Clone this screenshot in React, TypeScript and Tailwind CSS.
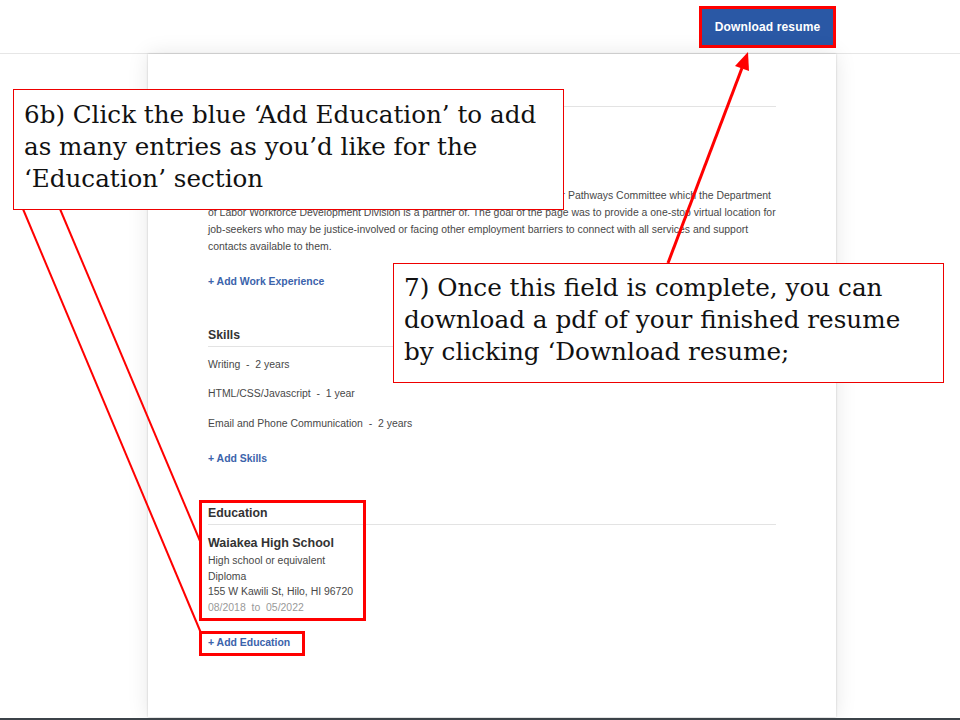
import React from "react";

const sans = { fontFamily: '"Liberation Sans", Arial, sans-serif' };
const serif = { fontFamily: '"DejaVu Serif", "Liberation Serif", serif' };

export default function App() {
  return (
    <div className="relative w-[960px] h-[720px] overflow-hidden bg-white" style={sans}>
      {/* header */}
      <div className="h-[54px] border-b border-[#e6e6e6] flex justify-end items-start pr-[124px] pt-[6px]">
        <div className="w-[137px] h-[42px] border-[3px] border-[#ff0000] bg-[#2a58a5] flex items-center justify-center">
          <span className="text-white text-[12px] font-bold tracking-[0.15px]">Download resume</span>
        </div>
      </div>

      {/* body */}
      <div className="flex h-[664px]">
        <div className="ml-[148px] w-[688px] h-[663px] bg-white shadow-[0_0_2px_rgba(0,0,0,0.2),0_0_20px_rgba(0,0,0,0.1)] px-[60px] text-[#484848] text-[10.45px]">
          {/* Work Experience (covered by callout) */}
          <div className="h-[53px] border-b border-[#e3e3e3]" />
          <div className="h-[80px]" />
          <div className="leading-[17px] whitespace-nowrap">
            <div className="text-right pr-[5px]">r Pathways Committee which the Department</div>
            <div>of Labor Workforce Development Division is a partner of. The goal of the page was to provide a one-stop virtual location for</div>
            <div>job-seekers who may be justice-involved or facing other employment barriers to connect with all services and support</div>
            <div>contacts available to them.</div>
          </div>
          <div className="mt-[19px] leading-[16px] text-[#3b63ab] font-bold">+ Add Work Experience</div>

          {/* Skills */}
          <div className="mt-[37px] leading-[16px] pb-[3px] border-b border-[#e3e3e3] text-[12.3px] font-bold text-[#333]">
            Skills
          </div>
          <div className="mt-[10px] leading-[16px]">Writing&nbsp; - &nbsp;2 years</div>
          <div className="mt-[13px] leading-[16px]">HTML/CSS/Javascript&nbsp; - &nbsp;1 year</div>
          <div className="mt-[14px] leading-[16px]">Email and Phone Communication&nbsp; - &nbsp;2 years</div>
          <div className="mt-[19px] leading-[16px] text-[#3b63ab] font-bold">+ Add Skills</div>

          {/* Education */}
          <div className="mt-[38px] leading-[16px] pb-[3px] border-b border-[#e3e3e3] text-[12.3px] font-bold text-[#333]">
            Education
          </div>
          <div className="mt-[10px] leading-[16px] text-[12.5px] font-bold text-[#333]">Waiakea High School</div>
          <div className="mt-[2px] leading-[15.5px]">
            <div>High school or equivalent</div>
            <div>Diploma</div>
            <div>155 W Kawili St, Hilo, HI 96720</div>
            <div className="text-[#999]">08/2018&nbsp; to &nbsp;05/2022</div>
          </div>
          <div className="mt-[20px] leading-[16px] text-[#3b63ab] font-bold">+ Add Education</div>
        </div>
      </div>

      {/* bottom bar */}
      <div className="absolute left-0 right-0 bottom-0 h-[2px] bg-[#3c4349]" />

      {/* highlight boxes */}
      <div className="absolute left-[199px] top-[500px] w-[167px] h-[121px] border-[3px] border-[#ff0000]" />
      <div className="absolute left-[199px] top-[631px] w-[106px] h-[25px] border-[3px] border-[#ff0000]" />

      {/* arrows */}
      <svg className="absolute left-0 top-0" width="960" height="720" viewBox="0 0 960 720">
        <line x1="668" y1="263" x2="742" y2="68" stroke="#ff0000" strokeWidth="3" />
        <polygon points="748,52 749,71 735,66" fill="#ff0000" />
        <line x1="23" y1="209" x2="201" y2="633" stroke="#ff0000" strokeWidth="2" />
        <line x1="60" y1="209" x2="200" y2="541" stroke="#ff0000" strokeWidth="2" />
      </svg>

      {/* callout 6b */}
      <div
        className="absolute left-[13px] top-[89px] w-[551px] h-[121px] border border-[#ee0000] bg-white pl-[10px] pt-[9px] text-[24.6px] leading-[32px] text-[#111] whitespace-nowrap"
        style={serif}
      >
        <div>6b) Click the blue ‘Add Education’ to add</div>
        <div>as many entries as you’d like for the</div>
        <div>‘Education’ section</div>
      </div>

      {/* callout 7 */}
      <div
        className="absolute left-[393px] top-[263px] w-[551px] h-[120px] border border-[#ee0000] bg-white pl-[10px] pt-[8px] text-[24.7px] leading-[32px] text-[#111] whitespace-nowrap"
        style={serif}
      >
        <div>7) Once this field is complete, you can</div>
        <div>download a pdf of your finished resume</div>
        <div>by clicking ‘Download resume;</div>
      </div>
    </div>
  );
}
